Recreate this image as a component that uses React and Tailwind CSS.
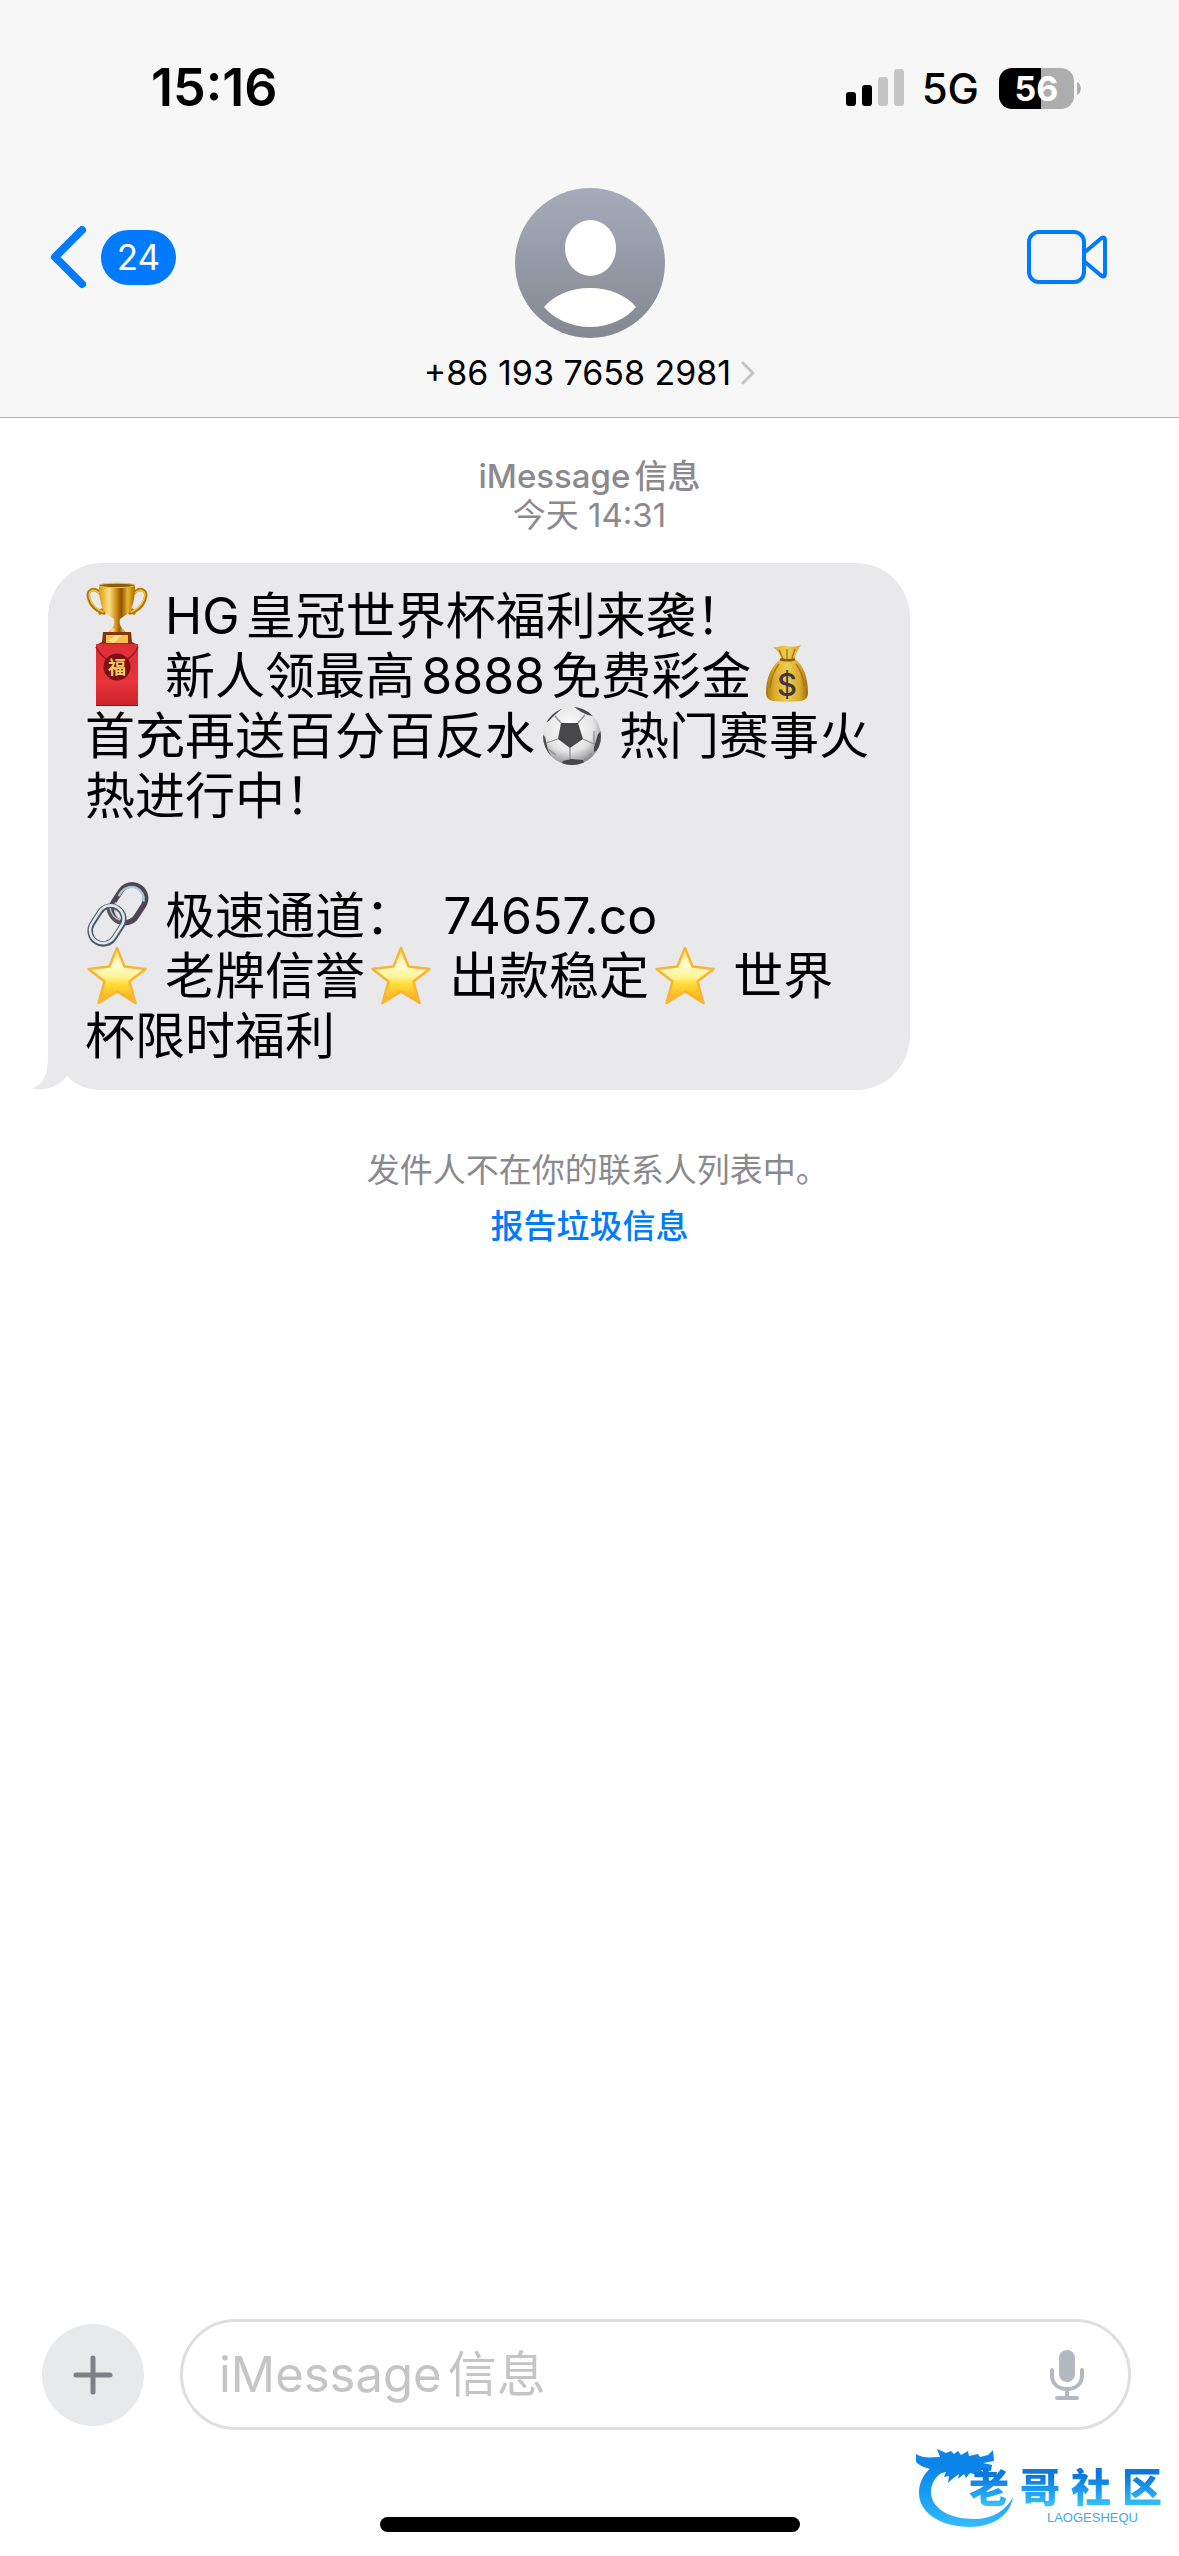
import { useId, useState } from "react";

const emojiBox = "inline-block w-[66px] h-16 -my-1 align-[-9px] overflow-visible";

function Trophy() {
  return (
    <svg viewBox="0 0 66 64" className={emojiBox} role="img" aria-label="🏆">
      <defs>
        <linearGradient id="cup" x1="0" x2="1">
          <stop offset="0" stopColor="#d89a10" />
          <stop offset=".28" stopColor="#fbe08a" />
          <stop offset=".5" stopColor="#c98708" />
          <stop offset=".62" stopColor="#8f5300" />
          <stop offset=".8" stopColor="#eab52c" />
          <stop offset="1" stopColor="#a86a00" />
        </linearGradient>
      </defs>
      <g fill="none" stroke="#b57608" strokeWidth="3.4" strokeLinecap="round">
        <path d="M15 10C8 3 1 8 4 16c2 7 8 12 15 14M17 27l-2 3" />
        <path d="M49 10c7-7 14-2 11 6-2 7-8 12-15 14M47 27l2 3" />
      </g>
      <g fill="none" stroke="#f3c644" strokeWidth="1.4" strokeLinecap="round">
        <path d="M14 10C8 4 2 9 5 16c2 6 8 11 13 13" />
        <path d="M50 10c6-6 12-1 9 6-2 6-8 11-13 13" />
      </g>
      <path d="M14 2h36c0 14-2 25-9 30-3 2-5 3-6 4-1 4 0 8 5 13H24c5-5 6-9 5-13-1-1-3-2-6-4-7-5-9-16-9-30z" fill="url(#cup)" />
      <ellipse cx="32" cy="2.4" rx="18" ry="2.2" fill="#8d5a08" stroke="#edc046" strokeWidth="1" />
      <path d="M25 47c3-3 11-3 14 0l3 4H22z" fill="url(#cup)" />
      <path d="M18 49h28l1 10 4 2v3H13v-3l4-2z" fill="#84330b" />
      <path d="M21 52h22v8H21z" fill="#f1bf4a" />
      <path d="M23 58l8-6h6l-8 8z" fill="#fbe08f" />
    </svg>
  );
}

function RedEnvelope() {
  return (
    <svg viewBox="0 0 66 64" className={emojiBox} role="img" aria-label="🧧">
      <defs>
        <linearGradient id="env" x2="0" y2="1">
          <stop offset="0" stopColor="#dc2f35" />
          <stop offset=".6" stopColor="#e93437" />
          <stop offset="1" stopColor="#c9232a" />
        </linearGradient>
      </defs>
      <path d="M11 1h42v62H11z" fill="url(#env)" />
      <path d="M11 4c3 7 8 11 13 14M53 4c-3 7-8 11-13 14" fill="none" stroke="#9b171f" strokeWidth="1.5" />
      <path d="M11 62.500h42" stroke="#8f1219" strokeWidth="1.2" />
      <circle cx="32" cy="24" r="13.5" fill="#7d0e15" />
      <text x="32" y="31" textAnchor="middle" className="font-['Noto_Sans_CJK_SC',sans-serif] text-[18px] font-bold" fill="#f3cf62">
        福
      </text>
    </svg>
  );
}

function MoneyBag() {
  return (
    <svg viewBox="0 0 66 64" className={`${emojiBox} ml-1`} role="img" aria-label="💰">
      <defs>
        <linearGradient id="bag" x1="0" x2="1">
          <stop offset="0" stopColor="#a8770f" />
          <stop offset=".2" stopColor="#dcab2c" />
          <stop offset=".5" stopColor="#efce4e" />
          <stop offset=".8" stopColor="#dba92c" />
          <stop offset="1" stopColor="#9c6c0c" />
        </linearGradient>
      </defs>
      <path d="M18 4c5 1 8-2 13-1s10 1 15-1c-3 5-6 9-6 14 8 6 13 18 13 34 0 4-2 7-7 8-9 1-19 1-28 0-5-1-7-4-7-8 0-16 6-28 15-34 0-4-3-8-8-12z" fill="url(#bag)" />
      <path d="M24 7l4 9M32 6v10M40 6l-3 9M24 21c-5 6-8 14-9 24M41 21c4 5 7 13 8 22" fill="none" stroke="#a8740f" strokeWidth="1.3" />
      <path d="M26 16.5c4 1 9 1 13 0" fill="none" stroke="#8a5a10" strokeWidth="2.4" strokeLinecap="round" />
      <text x="32" y="53" textAnchor="middle" className="font-['Inter',sans-serif] text-[31px] font-medium" fill="#45353c">
        $
      </text>
    </svg>
  );
}

function SoccerBall() {
  return (
    <svg viewBox="0 0 66 64" className={`${emojiBox} ml-1`} role="img" aria-label="⚽">
      <defs>
        <radialGradient id="ball" cx=".45" cy=".35" r=".65">
          <stop offset="0" stopColor="#ffffff" />
          <stop offset=".65" stopColor="#e4e4e4" />
          <stop offset="1" stopColor="#8e8e8e" />
        </radialGradient>
        <clipPath id="ballClip">
          <circle cx="33" cy="33" r="29" />
        </clipPath>
      </defs>
      <circle cx="33" cy="33" r="29" fill="url(#ball)" />
      <g clipPath="url(#ballClip)" fill="#47474a">
        <path d="M22 20h17l5 16-13 9-12-9z" />
        <path d="M34 3c8 0 15 4 20 10l-5-1c-5-2-9-4-15-9zM18 4l6 1c-5 4-10 8-14 13l-6 3zM2 30l4 4 3 13 3 6H2zM64 26l-5 5-4 13v5l9-5zM24 58l8-2 12 1 2 5-12 3-12-3z" />
      </g>
      <path d="M22 20l-6-7M39 20l7-8M44 36l11 5M31 45v11M19 36L7 40M55 28l0 15M17 52L9 46M45 57l8-7" fill="none" stroke="#909090" strokeWidth="1.3" />
    </svg>
  );
}

function ChainLink() {
  return (
    <svg viewBox="0 0 66 64" className={emojiBox} role="img" aria-label="🔗">
      <g fill="none">
        <g transform="rotate(33 44 21)">
          <rect x="30" y="1" width="27" height="40" rx="13.5" stroke="#4d4650" strokeWidth="5.5" />
          <path d="M31 20v-5a12.500 12.500 0 0 1 24-4" stroke="#a9c3df" strokeWidth="2.4" />
          <path d="M32 27c2 8 8 12 14 11" stroke="#c9cdd4" strokeWidth="1.6" />
        </g>
        <g transform="rotate(33 22 42)">
          <rect x="9" y="22" width="26" height="40" rx="13" stroke="#4e5862" strokeWidth="5.5" />
          <rect x="8.500" y="21.500" width="26" height="40" rx="13" stroke="#dfe9f2" strokeWidth="2.600" />
        </g>
        <path d="M24 24c0 7 5 13 11 15" stroke="#5a5058" strokeWidth="5" />
        <path d="M25 25c1 6 5 11 10 12" stroke="#b9bdc6" strokeWidth="1.500" />
      </g>
    </svg>
  );
}

function Star({ className = "" }) {
  const id = useId();
  return (
    <svg viewBox="0 0 66 64" className={`${emojiBox} ${className}`} role="img" aria-label="⭐">
      <defs>
        <linearGradient id={id} x2="0" y2="1">
          <stop offset="0" stopColor="#ffe469" />
          <stop offset=".3" stopColor="#fffbd0" />
          <stop offset=".52" stopColor="#fff69a" />
          <stop offset=".66" stopColor="#ffdc35" />
          <stop offset="1" stopColor="#fba51c" />
        </linearGradient>
      </defs>
      <path
        d="M32 5l7.500 18.500L60.500 26 44.500 38.500 50.500 60 32 48.500 13.500 60 19.500 38.500 3.500 26l21-2.500z"
        fill={`url(#${id})`}
        stroke="#f9b432"
        strokeWidth="2.500"
        strokeLinejoin="round"
      />
    </svg>
  );
}

function StatusBar() {
  return (
    <div className="flex h-[60px] items-center justify-between pl-[151px] pr-[98px]">
      <span className="text-[52px] font-semibold">15:16</span>
      <div className="flex items-center">
        <svg viewBox="0 0 58 38" className="h-[38px] w-[58px]">
          <rect x="0" y="23" width="10" height="14" rx="3" />
          <rect x="16" y="16" width="10" height="21" rx="3" />
          <rect x="32" y="8" width="10" height="29" rx="3" fill="#c5c5c5" />
          <rect x="48" y="0" width="10" height="37" rx="3" fill="#c5c5c5" />
        </svg>
        <span className="ml-[18px] mr-5 text-[42px] font-medium">5G</span>
        <div className="flex h-[41px] w-[75px] items-center justify-center rounded-[13px] bg-linear-to-r from-black from-56% to-[#adadad] to-56% text-[34px] font-bold text-white">
          56
        </div>
        <svg viewBox="0 0 4 13" className="ml-[3px] h-[13px] w-1">
          <path d="M0 0c5 2 5 11 0 13z" fill="#adadad" />
        </svg>
      </div>
    </div>
  );
}

function Header() {
  return (
    <header className="border-b border-[#b2b2b2] bg-[#f7f7f7] pt-[58px]">
      <StatusBar />
      <div className="grid grid-cols-[1fr_auto_1fr] items-start pt-[70px] pb-[22px]">
        <button className="flex h-[138px] items-center pl-[50px]" aria-label="返回">
          <svg viewBox="0 0 36 64" className="h-16 w-9" fill="none" stroke="#007aff" strokeWidth="8" strokeLinecap="round" strokeLinejoin="round">
            <path d="M32 5L5 32l27 27" />
          </svg>
          <span className="ml-[15px] flex h-[55px] w-[75px] items-center justify-center rounded-full bg-[#007aff] text-[35px] text-white">
            24
          </span>
        </button>

        <button className="flex flex-col items-center">
          <svg viewBox="0 0 150 150" className="size-[150px]">
            <defs>
              <linearGradient id="avatar" x2="0" y2="1">
                <stop offset="0" stopColor="#a5abba" />
                <stop offset="1" stopColor="#858891" />
              </linearGradient>
            </defs>
            <circle cx="75" cy="75" r="75" fill="url(#avatar)" />
            <ellipse cx="75.500" cy="60" rx="25.500" ry="28" fill="#fff" />
            <path d="M29 119c10-12 27-19 46-19s36 7 46 19c-10 12-27 20-46 20s-36-8-46-20z" fill="#fff" />
          </svg>
          <span className="mt-[13px] flex items-center gap-2.5 text-[34px] leading-[44px]">
            +86 193 7658 2981
            <svg viewBox="0 0 14 24" className="h-6 w-3.5" fill="none" stroke="#c4c4c6" strokeWidth="3" strokeLinecap="round" strokeLinejoin="round">
              <path d="M2 2l10 10L2 22" />
            </svg>
          </span>
        </button>

        <button className="flex h-[138px] items-center justify-self-end pr-[72px]" aria-label="视频通话">
          <svg viewBox="0 0 80 54" className="h-[54px] w-20" fill="none" stroke="#007aff" strokeWidth="4" strokeLinejoin="round">
            <rect x="2" y="2" width="55" height="50" rx="10" />
            <path d="M58 22L74 8.500q4-2.500 4 1.500v34q0 4-4 1.500L58 32" />
          </svg>
        </button>
      </div>
    </header>
  );
}

function Bubble() {
  return (
    <div className="relative ml-12 mt-7 max-w-[862px] rounded-[54px] bg-[#e9e9eb] px-[37px] pt-[23px] pb-6 text-[50px] leading-[60px] [text-autospace:normal]">
      <svg viewBox="0 0 70 60" className="absolute bottom-0 -left-4 h-[60px] w-[70px]">
        <path d="M0 0h70v60H0z" fill="#fff" />
        <path d="M16 0h54v60C56 60 44 56 35 46 27 56 15 61 0 59 12 54 16 43 16 28z" fill="#e9e9eb" />
      </svg>
      <div className="relative whitespace-pre">
        <p><Trophy /> HG皇冠世界杯福利来袭！</p>
        <p><RedEnvelope /> 新人领最高8888免费彩金<MoneyBag /></p>
        <p>首充再送百分百反水<SoccerBall /> 热门赛事火</p>
        <p>热进行中！</p>
        <br />
        <p><ChainLink /> 极速通道：{"  "}74657.co</p>
        <p><Star /> 老牌信誉<Star className="ml-1" /> 出款稳定<Star className="ml-1" /> 世界</p>
        <p>杯限时福利</p>
      </div>
    </div>
  );
}

function Composer() {
  const [text, setText] = useState("");

  return (
    <div className="flex items-center gap-9 pl-[42px] pr-12">
      <button className="flex size-[102px] shrink-0 items-center justify-center rounded-full bg-[#e8e9eb]" aria-label="添加">
        <svg viewBox="0 0 40 40" className="size-10" stroke="#808086" strokeWidth="5" strokeLinecap="round">
          <path d="M20 3v34M3 20h34" />
        </svg>
      </button>
      <div className="flex h-[111px] min-w-0 flex-1 items-center rounded-full border-3 border-[#dfdfe0] pl-9 pr-[43px]">
        <input
          type="text"
          aria-label="iMessage信息"
          placeholder="iMessage信息"
          value={text}
          onChange={(e) => setText(e.target.value)}
          className="min-w-0 flex-1 bg-transparent text-[49px] leading-[60px] outline-none placeholder:text-[#c5c5c7] [text-autospace:normal]"
        />
        <button aria-label="听写">
          <svg viewBox="0 0 36 50" className="h-[50px] w-9" fill="none" stroke="#b3b8c1" strokeWidth="4" strokeLinecap="round">
            <rect x="10" y="0" width="16" height="32" rx="8" fill="#b3b8c1" stroke="none" />
            <path d="M3 20v5c0 9 6 14 15 14s15-5 15-14v-5M18 40v7M8 48h20" />
          </svg>
        </button>
      </div>
    </div>
  );
}

function CommunityLogo() {
  return (
    <div className="absolute right-[17px] bottom-[22px] h-[92px] w-[246px]">
      <svg viewBox="0 0 246 92" className="absolute inset-0 size-full">
        <defs>
          <linearGradient id="dragon" x2="0" y2="1">
            <stop offset="0" stopColor="#0b7fe4" />
            <stop offset=".5" stopColor="#189bf5" />
            <stop offset="1" stopColor="#35bcfb" />
          </linearGradient>
        </defs>
        {/* dragon body, a crescent that thins out to the tail */}
        <path
          d="M34 16C14 22 3 35 3 51c0 20 22 34 51 34 22 0 40-11 43-30-7 14-21 22-39 22-25 0-43-11-43-27 0-12 9-22 26-26z"
          fill="url(#dragon)"
        />
        {/* whisker, crest and jaw */}
        <path
          d="M0 12c8 5 16 3 24 3l-3-8 9 4 5-2 3 3 4-3 3 4 7-4 1 5 9-2 2 3 8-2 5-5 1 11-11 2 9 2-1 6-10-1 4 4-8 1-7-2-4 5-2-4-6 5 1-5-8 6-3 3 1-7-5 1 2-5-8 2 6-6c-11 3-22 0-28-6z"
          fill="#0c84e8"
        />
      </svg>
      <div className="relative flex flex-col items-end pt-[26px]">
        <span className="flex gap-[11px] bg-linear-to-b from-[#0a78de] from-20% to-[#35bcfb] to-90% bg-clip-text font-['Inter','Noto_Sans_CJK_SC',sans-serif] text-[40px] leading-[40px] font-black text-transparent">
          <b>老</b>
          <b>哥</b>
          <b>社</b>
          <b>区</b>
        </span>
        <span className="mr-6 mt-1 font-['Liberation_Sans',sans-serif] text-[13px] leading-3 text-[#3fa9ee]">LAOGESHEQU</span>
      </div>
    </div>
  );
}

export default function App() {
  return (
    <div className="relative flex min-h-screen flex-col bg-white font-['Inter','Noto_Sans_CJK_SC',sans-serif] text-black">
      <Header />

      <main className="flex-1 pt-[39px]">
        <div className="text-center text-[33px] leading-[39px] text-[#8a8a8e] [text-autospace:normal]">
          <p className="font-medium">iMessage信息</p>
          <p>今天 14:31</p>
        </div>

        <Bubble />

        <div className="mt-[52px] flex flex-col items-center text-[33px] leading-[56px]">
          <p className="text-[#8a8a8e] [font-feature-settings:'halt']">发件人不在你的联系人列表中。</p>
          <button className="font-medium text-[#007aff]">报告垃圾信息</button>
        </div>
      </main>

      <footer className="pb-6">
        <Composer />
        <div className="mx-auto mt-[87px] h-[15px] w-[420px] rounded-full bg-black" />
      </footer>

      <CommunityLogo />
    </div>
  );
}
